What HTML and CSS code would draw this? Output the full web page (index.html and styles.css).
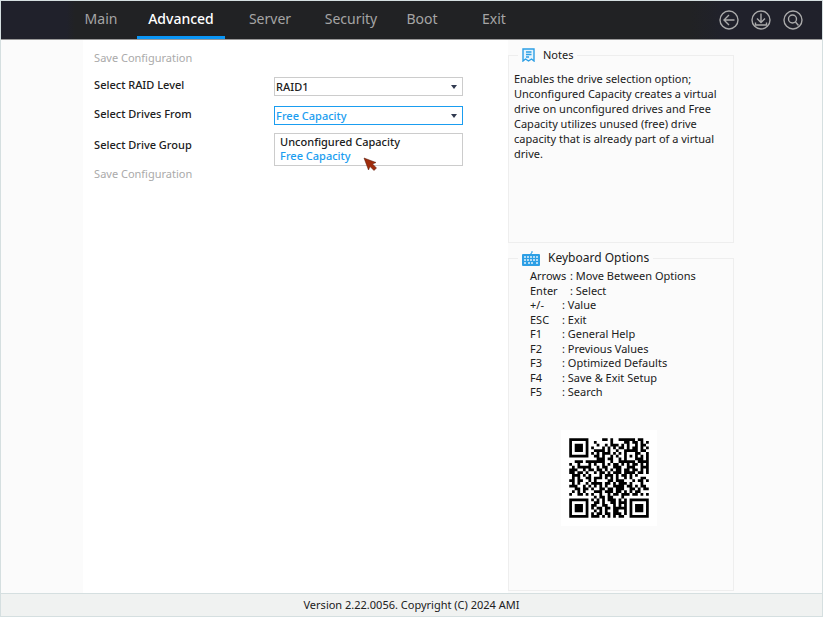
FILE: index.html
```html
<!DOCTYPE html>
<html lang="en">
<head>
    <meta charset="UTF-8">
    <meta name="viewport" content="width=device-width, initial-scale=1.0">
    <title>Setup Utility</title>
    <link rel="stylesheet" href="styles.css">
</head>
<body>
<header class="topbar">
    <nav class="tabs">
        <a href="#main">Main</a>
        <a href="#advanced" class="active">Advanced</a>
        <a href="#server">Server</a>
        <a href="#security">Security</a>
        <a href="#boot">Boot</a>
        <a href="#exit">Exit</a>
    </nav>
    <div class="actions">
        <button type="button" aria-label="Back">
            <svg viewBox="0 0 20 20"><circle cx="10" cy="10" r="9"/><path d="M15.5 10H5M10 5L5 10l5 5"/></svg>
        </button>
        <button type="button" aria-label="Save">
            <svg viewBox="0 0 20 20"><circle cx="10" cy="10" r="9"/><path d="M10 3.500V12M6 8.500l4 4 4-4M4.500 12.500V15h11v-2.500"/></svg>
        </button>
        <button type="button" aria-label="Search">
            <svg viewBox="0 0 20 20"><circle cx="10" cy="10" r="9"/><circle cx="9.500" cy="9" r="4"/><path d="M12.500 12l3 3.500"/></svg>
        </button>
    </div>
</header>

<div class="page">
    <main class="settings">
        <div class="row disabled">Save Configuration</div>
        <div class="row field">
            <label for="raid-level">Select RAID Level</label>
            <div class="dropdown">
                <select id="raid-level">
                    <option>RAID1</option>
                </select>
            </div>
        </div>
        <div class="row field">
            <label for="drives-from">Select Drives From</label>
            <div class="dropdown open">
                <select id="drives-from">
                    <option>Unconfigured Capacity</option>
                    <option selected>Free Capacity</option>
                </select>
                <ul class="options">
                    <li>Unconfigured Capacity</li>
                    <li class="selected">Free Capacity</li>
                </ul>
                <svg class="pointer" viewBox="0 0 14 14"><path d="M1 1l12 4.500-3.500 1.500 4 4-2.500 2.500-4-4L5.500 13z"/></svg>
            </div>
        </div>
        <div class="row">Select Drive Group</div>
        <div class="row disabled">Save Configuration</div>
    </main>

    <aside class="side">
        <fieldset class="panel notes">
            <legend>
                <svg class="note-icon" viewBox="0 0 13 14"><path d="M1 1h11v12l-2.500-2L6.500 13l-3-2L1 13z"/><path d="M4 4h5.500M4 6.500h5.500M4 9h3"/></svg>
                Notes
            </legend>
            <p>Enables the drive selection option; Unconfigured Capacity creates a virtual drive on unconfigured drives and Free Capacity utilizes unused (free) drive capacity that is already part of a virtual drive.</p>
        </fieldset>
        <fieldset class="panel keys">
            <legend>
                <svg class="key-icon" viewBox="0 0 18 15"><path class="cord" d="M9 4V2h1V0"/><rect y="3" width="18" height="12" rx="1"/><path class="caps" d="M2 6h14M2 9h14M2 12h2M6 12h6M14 12h2"/></svg>
                Keyboard Options
            </legend>
            <dl>
                <div><dt class="long">Arrows</dt><dd>: Move Between Options</dd></div>
                <div><dt class="long">Enter</dt><dd>: Select</dd></div>
                <div><dt>+/-</dt><dd>: Value</dd></div>
                <div><dt>ESC</dt><dd>: Exit</dd></div>
                <div><dt>F1</dt><dd>: General Help</dd></div>
                <div><dt>F2</dt><dd>: Previous Values</dd></div>
                <div><dt>F3</dt><dd>: Optimized Defaults</dd></div>
                <div><dt>F4</dt><dd>: Save &amp; Exit Setup</dd></div>
                <div><dt>F5</dt><dd>: Search</dd></div>
            </dl>
            <svg class="qr" id="qr" viewBox="-3 -3 35 35" role="img" aria-label="QR code"></svg>
        </fieldset>
    </aside>
</div>

<footer>Version 2.22.0056. Copyright (C) 2024 AMI</footer>

<script>
    // one string per module row, # is dark
    var rows = [
        '#######.....##.#..######.##..',
        '#.....#..#.....#....##.##.#.#',
        '#.###.#...#..#.###.#.#..#.##.',
        '#.###.#.#...#.#.#.##.#.##.#.#',
        '#.###.#..####.#..#..#####.##.',
        '#.....#.#.#.###.#.#.#...##..#',
        '#######..##.#..#.#..#.#.#.#.#',
        '..........###.##..#.#...###.#',
        '..###.#######..#..######.####',
        '#..#...#.#..#.#.##.#.#.##.#.#',
        '.#.#####..#.##..###..###..###',
        '###..#.##.##.#.#.##.##.##.#.#',
        '##.##.#..#.##.#.###.####.##.#',
        '.###.#.#...#.###.#.##.#.#....',
        '.#.#..##.###.#.#.#..#.#...##.',
        '##.##..#.#....##.###...#.##.#',
        '.#.#..#.####.##.#.###.#...#..',
        '###..#.#.#.#.#..####.##.#.##.',
        '..##.##.#..##.##.###..##.#.##',
        '.#.#.#...###.###.##.#.#.##...',
        '#..##.#.#..#..#.##.###.##.#.#',
        '.........#.##.##...#.........',
        '#######.#.#.#.###.#.#.#######',
        '#.....#..##.#..##.###.#.....#',
        '#.###.#.##..##..#.#.#.#.###.#',
        '#.###.#.#.##.##.#####.#.###.#',
        '#.###.#..#.#.#..##..#.#.###.#',
        '#.....#.#.##.##.###.#.#.....#',
        '#######.###.#.#.#.##..#######'
    ];
    document.getElementById('qr').innerHTML = '<path d="' + rows.map(function (row, y) {
        return row.split('').map(function (c, x) {
            return c === '#' ? 'M' + x + ' ' + y + 'h1v1h-1z' : '';
        }).join('');
    }).join('') + '"/>';
</script>
</body>
</html>
```
FILE: styles.css
```css
* {
    box-sizing: border-box;
}

body {
    margin: 0;
    min-height: 100vh;
    display: flex;
    flex-direction: column;
    border: 1px solid #d5dfe0;
    background-color: #fbfbfb;
    color: #202020;
    font-family: "Noto Sans", sans-serif;
    font-size: 11px;
    line-height: 14px;
}

/* Top bar */
.topbar {
    height: 39px;
    display: flex;
    justify-content: space-between;
    padding: 0 19px 0 64px;
    background: linear-gradient(to right, #20212b 8%, #212224 9%, #212224 84%, #20212b 88%);
    border-bottom: 1px solid #999;
}

.tabs {
    display: grid;
    grid-template-columns: 72px 88px 90px 72px 70px 74px;
}

.tabs a {
    display: flex;
    align-items: center;
    justify-content: center;
    color: #a5a5a5;
    font-size: 14px;
    text-decoration: none;
    border-bottom: 3px solid transparent;
}

.tabs .active {
    color: #fff;
    font-weight: 500;
    border-bottom-color: #0a95f5;
}

.actions {
    display: flex;
    align-items: center;
    gap: 12px;
}

.actions button {
    width: 20px;
    height: 20px;
    padding: 0;
    border: none;
    background: none;
}

.actions svg {
    display: block;
    fill: none;
    stroke: #aaa;
    stroke-width: 1.4;
}

/* Page columns */
.page {
    flex: 1;
    display: grid;
    grid-template-columns: 10% 1fr 226px 88px;
}

.settings {
    grid-column: 2;
    padding: 3px 11px;
    background-color: #fff;
}

.row {
    height: 29px;
    display: flex;
    align-items: center;
    font-weight: 500;
}

.disabled {
    color: #aaa;
    font-weight: 400;
}

.field label {
    width: 180px;
    padding-bottom: 4px;
}

/* Dropdowns */
.dropdown {
    position: relative;
    width: 189px;
}

.dropdown::after {
    content: "";
    position: absolute;
    top: 8px;
    right: 6px;
    border: 4px solid transparent;
    border-width: 4px 3px 0;
    border-top-color: #303a50;
    pointer-events: none;
}

.dropdown select {
    display: block;
    width: 100%;
    height: 19px;
    padding: 0 1px;
    appearance: none;
    border: 1px solid #ccc;
    border-radius: 0;
    background-color: #fff;
    color: inherit;
    font: inherit;
}

.dropdown.open select {
    border-color: #1a9df0;
    color: #1a9df0;
}

.options {
    position: absolute;
    top: 27px;
    left: 0;
    width: 100%;
    margin: 0;
    padding: 1px 5px 2px;
    list-style: none;
    border: 1px solid #ccc;
    background-color: #fff;
}

.options .selected {
    color: #1a9df0;
}

.pointer {
    position: absolute;
    top: 51px;
    left: 89px;
    width: 14px;
    height: 14px;
    fill: #a02c0c;
    stroke: #501505;
    stroke-width: 0.5;
}

/* Right side panels */
.side {
    display: flex;
    flex-direction: column;
    padding-bottom: 2px;
}

.panel {
    min-width: 0;
    margin: 0;
    padding: 0 5px;
    border: 1px solid #eee;
}

.panel legend {
    display: flex;
    align-items: center;
    padding: 0 4px;
    margin-left: 4px;
    line-height: 16px;
}

.notes {
    height: 196px;
    margin-top: 7px;
}

.notes legend {
    gap: 8px;
}

.notes p {
    margin: 8px 0 0;
    line-height: 15px;
}

.note-icon {
    width: 13px;
    height: 14px;
    fill: #e5f4fd;
    stroke: #2d9fe5;
    stroke-width: 1.4;
}

.keys {
    flex: 1;
    margin-top: 7px;
}

.keys legend {
    gap: 8px;
    font-size: 12px;
}

.key-icon {
    width: 18px;
    height: 15px;
    fill: #2d9fe5;
}

.key-icon .cord {
    fill: none;
    stroke: #2d9fe5;
}

.key-icon .caps {
    stroke: #dff1fc;
    stroke-width: 1.4;
    stroke-dasharray: 2 1;
}

.keys dl {
    height: 130px;
    display: flex;
    flex-direction: column;
    justify-content: space-between;
    margin: 3px 0 0 16px;
}

.keys dl div {
    display: flex;
}

.keys dt {
    width: 32px;
}

.keys .long {
    width: 40px;
}

.keys dd {
    margin: 0;
}

.qr {
    display: block;
    width: 96px;
    margin: 31px 0 0 47px;
    background-color: #fff;
}

footer {
    height: 23px;
    border-top: 1px solid #d5dfe0;
    background-color: #f0f2f1;
    line-height: 22px;
    text-align: center;
}
```
